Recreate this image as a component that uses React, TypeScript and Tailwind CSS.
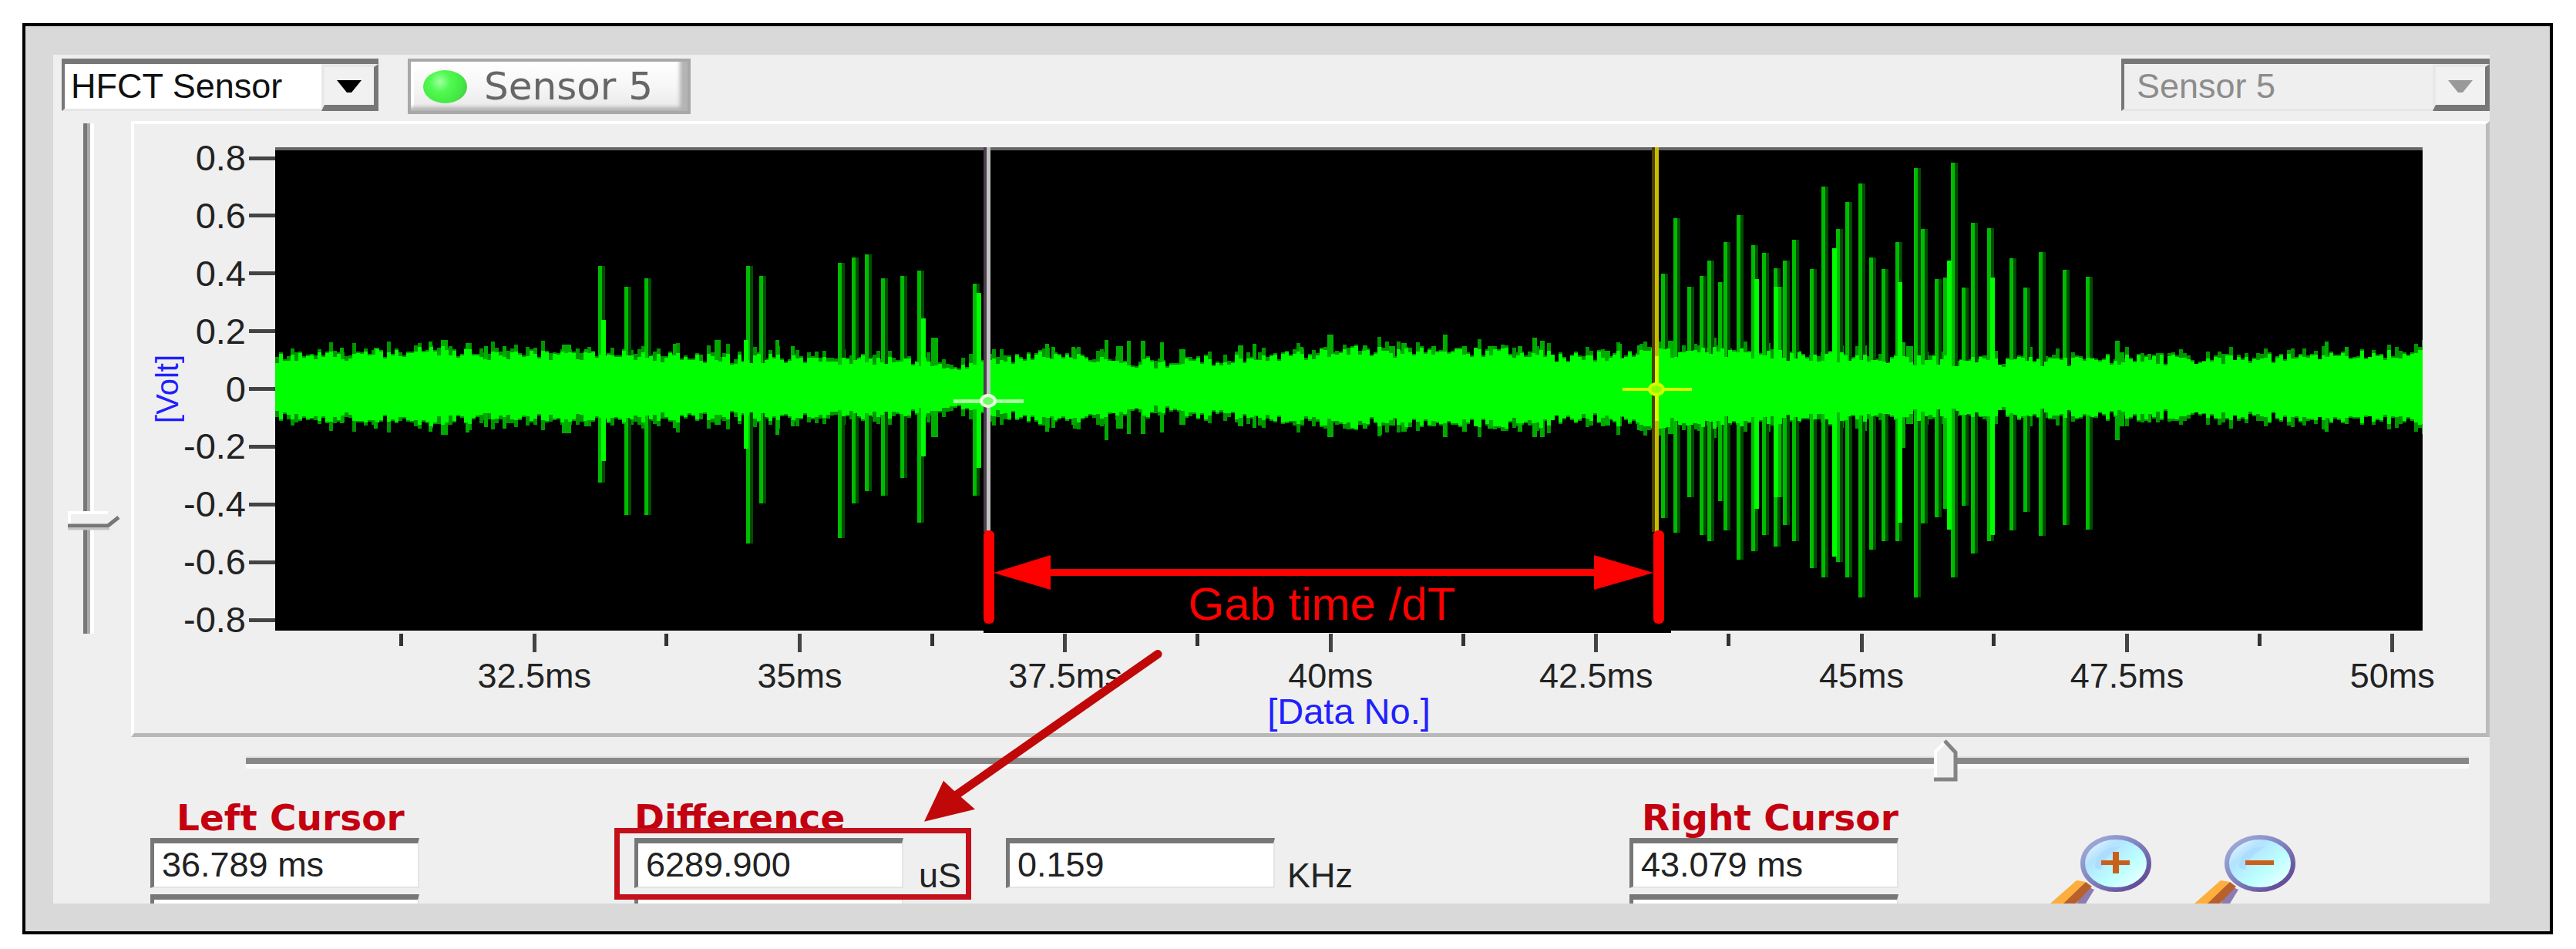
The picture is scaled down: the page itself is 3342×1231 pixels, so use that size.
import React, { useState } from "react";

const PLOT = { x: 357, y: 191, w: 2786, h: 627 };

const Y_LABELS = ["0.8", "0.6", "0.4", "0.2", "0", "-0.2", "-0.4", "-0.6", "-0.8"];
const X_LABELS = ["32.5ms", "35ms", "37.5ms", "40ms", "42.5ms", "45ms", "47.5ms", "50ms"];

// Noise band: x, upper edge, lower edge
const BAND: number[][] = [
  [357, 466, 538], [460, 464, 540], [570, 457, 545], [640, 464, 538], [740, 463, 541], [830, 463, 542],
  [920, 468, 537], [1010, 467, 540], [1100, 470, 535], [1200, 472, 534], [1230, 476, 530], [1290, 472, 532],
  [1350, 464, 541], [1430, 469, 537], [1515, 475, 529], [1560, 470, 536], [1640, 467, 540], [1700, 461, 545],
  [1760, 458, 547], [1850, 459, 545], [1980, 460, 549], [2035, 467, 539], [2090, 463, 543], [2150, 460, 548],
  [2240, 459, 545], [2360, 465, 540], [2440, 469, 537], [2560, 471, 534], [2660, 472, 534], [2760, 467, 538],
  [2850, 470, 536], [2950, 467, 539], [3060, 464, 541], [3143, 462, 543],
];

// Short peaks standing out of the band: x, top, bottom, width
const PEAKS: number[][] = [
  [444, 451, 549, 5], [488, 451, 556, 5], [559, 443, 560, 5], [577, 441, 564, 9], [607, 445, 561, 5],
  [631, 449, 554, 5], [655, 449, 556, 5], [735, 447, 562, 12], [761, 453, 553, 5], [876, 446, 555, 5],
  [931, 441, 551, 8], [1009, 441, 564, 5], [1029, 449, 553, 5], [1213, 438, 567, 9], [1359, 446, 560, 5],
  [1367, 450, 555, 5], [1393, 450, 551, 5], [1436, 441, 571, 5], [1453, 449, 556, 9], [1465, 442, 563, 5],
  [1483, 442, 563, 6], [1508, 444, 561, 5], [1534, 453, 551, 8], [1610, 448, 553, 7], [1628, 446, 555, 5],
  [1688, 450, 550, 6], [1726, 434, 567, 8], [1771, 448, 556, 6], [1791, 450, 564, 5], [1806, 449, 552, 8],
  [1822, 445, 560, 7], [1860, 449, 553, 6], [1875, 434, 567, 6], [1900, 449, 560, 6], [1935, 449, 556, 9],
  [1972, 449, 560, 6], [1991, 438, 567, 6], [2001, 442, 567, 6], [2083, 455, 552, 12], [2102, 446, 553, 5],
  [2127, 448, 558, 6], [2166, 442, 563, 10], [2470, 444, 581, 5], [2478, 449, 550, 9], [2630, 457, 552, 5],
  [2747, 442, 571, 6], [2752, 457, 553, 8], [2789, 459, 548, 5], [3019, 443, 560, 5], [3045, 450, 550, 5],
];

// Discharge pulses: x, top, bottom
const PULSES: number[][] = [
  [778, 345, 626], [812, 372, 668], [838, 361, 668], [970, 345, 705], [987, 358, 653], [1089, 341, 698],
  [1107, 334, 653], [1124, 330, 637], [1145, 361, 643], [1170, 358, 620], [1192, 351, 678], [1264, 368, 643],
  [2157, 355, 672], [2173, 283, 691], [2191, 372, 645], [2207, 358, 694], [2217, 338, 702], [2231, 366, 650],
  [2238, 314, 688], [2255, 279, 726], [2274, 318, 715], [2288, 328, 694], [2303, 348, 709], [2308, 372, 645],
  [2315, 338, 681], [2327, 311, 702], [2350, 349, 737], [2365, 242, 749], [2384, 297, 729], [2396, 262, 749],
  [2413, 238, 775], [2427, 334, 713], [2443, 349, 702], [2461, 314, 702], [2485, 218, 775], [2494, 297, 679],
  [2512, 362, 671], [2523, 360, 660], [2533, 211, 749], [2547, 373, 656], [2559, 289, 718], [2580, 296, 702],
  [2609, 335, 688], [2627, 373, 664], [2647, 327, 695], [2678, 350, 681], [2708, 359, 687],
];

// Overlapping samples that draw at full brightness
const BRIGHT: number[][] = [
  [782, 415, 598], [967, 441, 582], [1197, 413, 592], [1269, 380, 607], [2278, 362, 660], [2303, 372, 645],
  [2379, 322, 722], [2464, 366, 678], [2528, 338, 687], [2584, 360, 694],
];

function bandAt(x: number) {
  let i = 0;
  while (i < BAND.length - 2 && BAND[i + 1][0] < x) i++;
  const [x0, t0, b0] = BAND[i];
  const [x1, t1, b1] = BAND[i + 1];
  const k = (x - x0) / (x1 - x0);
  return [t0 + (t1 - t0) * k, b0 + (b1 - b0) * k];
}

function makeNoise() {
  let seed = 71;
  const rnd = () => {
    seed = (seed * 16807) % 2147483647;
    return seed / 2147483647;
  };
  let core = "";
  let fringe = "";
  for (let x = PLOT.x; x < PLOT.x + PLOT.w; x += 5) {
    const [t, b] = bandAt(x);
    const lift = Math.round((rnd() - 0.35) * 14);
    const top = Math.round(t) - lift;
    const bottom = Math.round(b) + Math.round(lift * 0.9 + (rnd() - 0.5) * 4);
    core += `M${x} ${top}h5V${bottom}h-5z`;
    const extra = rnd() > 0.5 ? Math.round(rnd() * 14) : 2;
    fringe += `M${x} ${top - extra}h5V${bottom + extra}h-5z`;
  }
  return { core, fringe };
}

const NOISE = makeNoise();

function Waveform() {
  return (
    <svg
      className="absolute inset-0 h-full w-full"
      viewBox="357 191 2786 627"
      preserveAspectRatio="none"
      shapeRendering="crispEdges"
      role="img"
      aria-label="Sensor signal in volts over time"
    >
      <path d={NOISE.fringe} fill="#009600" />
      {PEAKS.map(([x, t, b, w]) => (
        <rect key={x} x={x - Math.round(w / 2)} y={t} width={w} height={b - t} fill="#00ac00" />
      ))}
      {PULSES.map(([x, t, b]) => (
        <g key={x}>
          <rect x={x - 2} y={t} width={9} height={b - t} fill="#004c00" />
          <rect x={x - 2} y={t} width={5} height={b - t} fill="#00bc00" />
        </g>
      ))}
      {BRIGHT.map(([x, t, b]) => (
        <rect key={x} x={x - 2} y={t} width={6} height={b - t} fill="#00ff00" />
      ))}
      <path d={NOISE.core} fill="#00ff00" />

      <rect x="1276" y="191" width="4" height="499" fill="#4a3f4a" />
      <rect x="1280" y="191" width="5" height="499" fill="#c4c4c4" />
      <path d="M1237 518h91v5h-91z" fill="#a8ffa0" />
      <ellipse cx="1282" cy="520" rx="9" ry="7" fill="#70ff60" stroke="#e8ffe4" strokeWidth="4" shapeRendering="auto" />
      <rect x="2143" y="191" width="4" height="499" fill="#4a4000" />
      <rect x="2147" y="191" width="5" height="499" fill="#c8bc00" />
      <rect x="2147" y="462" width="5" height="84" fill="#d8ff00" />
      <path d="M2105 503h90v4h-90z" fill="#d8ff00" />
      <ellipse cx="2149" cy="505" rx="9" ry="7" fill="#90ff00" stroke="#d0ff00" strokeWidth="4" shapeRendering="auto" />

      <g fill="#ff0000" shapeRendering="auto">
        <rect x="1276" y="688" width="14" height="121" rx="6" />
        <rect x="2145" y="688" width="14" height="121" rx="6" />
        <rect x="1360" y="738" width="712" height="9" />
        <path d="M1289 743L1363 720V765z" />
        <path d="M2145 743L2068 720V765z" />
      </g>
    </svg>
  );
}

function Combo({ label, options, disabled, className }: { label: string; options: string[]; disabled?: boolean; className: string }) {
  return (
    <div className={`relative h-[68px] border-4 border-t-[7px] border-b-[3px] border-[#777777] border-b-[#e6e6e6] ${className}`}>
      <select
        aria-label={label}
        disabled={disabled}
        className="h-full w-full appearance-none bg-white pl-2 pr-20 text-[45px] leading-[48px] text-[#111111] opacity-100 outline-none disabled:bg-[#efefef] disabled:pl-4 disabled:text-[#8c8c8c]"
      >
        {options.map((o) => (
          <option key={o}>{o}</option>
        ))}
      </select>
      <span className="pointer-events-none absolute top-0 -right-1 -bottom-[3px] flex w-[74px] items-center justify-center border-t-4 border-r-[6px] border-b-8 border-l-4 border-[#777777] border-t-[#e8e8e8] border-l-[#e8e8e8] bg-[#f1f1f1]">
        <svg width="32" height="16" viewBox="0 0 32 16" aria-hidden="true">
          <path d="M0 0H32L19 16H13z" fill={disabled ? "#999999" : "#000000"} />
        </svg>
      </span>
    </div>
  );
}

function Field({ id, initial }: { id: string; initial: string }) {
  const [value, setValue] = useState(initial);
  return (
    <input
      id={id}
      aria-label={id}
      value={value}
      onChange={(e) => setValue(e.target.value)}
      className="block h-[65px] w-[349px] shrink-0 border-t-[7px] border-r-2 border-b-2 border-l-[5px] border-[#e4e4e4] border-t-[#777777] border-l-[#777777] bg-white pl-[10px] text-[45px] leading-[48px] text-[#222222] outline-none"
    />
  );
}

function NextField({ id }: { id: string }) {
  return (
    <div className="mt-2 h-3 overflow-hidden">
      <Field id={id} initial="" />
    </div>
  );
}

function Magnifier({ minus }: { minus?: boolean }) {
  const id = minus ? "lens-out" : "lens-in";
  return (
    <svg className="block" width="140" height="90" viewBox="0 0 140 90" aria-hidden="true">
      <defs>
        <linearGradient id={id} x1="0" y1="0" x2="1" y2="1">
          <stop offset="0" stopColor="#ffffff" />
          <stop offset="0.3" stopColor="#b4e2ff" />
          <stop offset="0.6" stopColor="#bcffff" />
          <stop offset="1" stopColor="#ffffff" />
        </linearGradient>
        <linearGradient id={`${id}-rim`} x1="0" y1="0" x2="1" y2="1">
          <stop offset="0" stopColor="#a3b4dc" />
          <stop offset="0.5" stopColor="#7f7fbe" />
          <stop offset="1" stopColor="#5a3c8c" />
        </linearGradient>
      </defs>
      <path d="M34 90L48 68L57 72L46 90z" fill="#8c7cb0" />
      <path d="M14 90L46 62L54 68L33 90z" fill="#b8602c" />
      <path d="M0 90L34 60L46 62L17 90z" fill="#fdae3c" />
      <ellipse cx="85" cy="38" rx="43" ry="34" fill={`url(#${id})`} stroke={`url(#${id}-rim)`} strokeWidth="6" />
      <path d="M58 44C58 26 74 16 92 16C84 22 70 28 66 46z" fill="#a8d8ff" opacity="0.7" />
      <path d="M66 34h37v6h-37z" fill="#c8601c" />
      {!minus && <path d="M81 23h8v28h-8z" fill="#c8601c" />}
    </svg>
  );
}

function Heading({ children, htmlFor, className }: { children: React.ReactNode; htmlFor: string; className?: string }) {
  return (
    <label
      htmlFor={htmlFor}
      className={`mb-[3px] block font-['DejaVu_Sans',sans-serif] text-[47px] leading-[47px] font-bold whitespace-nowrap text-[#c40010] ${className ?? ""}`}
    >
      {children}
    </label>
  );
}

export default function App() {
  const [vertical, setVertical] = useState(78);
  const [horizontal, setHorizontal] = useState(77);

  return (
    <main className="min-h-screen bg-white pt-[30px] pr-[30px] pb-5 pl-[29px] font-['Liberation_Sans',Arial,sans-serif]">
      <section className="border-4 border-black bg-[#d9d9d9] pt-[37px] pr-[78px] pb-9 pl-9">
        <div className="relative overflow-hidden bg-[#efefef]">
          <header className="flex items-start justify-between pt-[5px] pl-[11px]">
            <div className="flex items-start gap-[38px]">
              <Combo label="Sensor type" options={["HFCT Sensor"]} className="w-[411px]" />
              <button className="flex h-[72px] w-[367px] items-center gap-[22px] border-4 border-[#a8a8a8] bg-gradient-to-b from-white via-[#f6f6f6] to-[#e8e8e8] pl-4 font-['DejaVu_Sans',sans-serif] text-[50px] leading-none whitespace-nowrap text-[#666666] shadow-[inset_-10px_-5px_5px_#b4b4b4,inset_4px_4px_0_#ffffff]">
                <span className="h-[43px] w-[57px] shrink-0 rounded-[50%] bg-[radial-gradient(circle_at_38%_35%,#a0ffa0_0%,#50fa50_30%,#44e844_65%,#48b448_100%)]" />
                Sensor 5
              </button>
            </div>
            <Combo label="Sensor channel" options={["Sensor 5"]} disabled className="w-[478px]" />
          </header>

          <div className="mt-[9px] flex">
            <div className="w-[101px] shrink-0 pt-[3px] pl-[19px]">
              <div className="relative flex h-[662px] w-[68px] pl-5">
                <div className="h-full w-[14px] border-r-[5px] border-l-[5px] border-r-white border-l-[#777777] bg-[#aaaaaa]" />
                <svg
                  className="absolute left-0 -translate-y-1/2"
                  style={{ top: `${vertical}%` }}
                  width="68"
                  height="28"
                  viewBox="0 0 68 28"
                  aria-hidden="true"
                >
                  <path d="M2 2H54L66 11L53 24H2z" fill="#efefef" />
                  <path d="M2 22V3H52" fill="none" stroke="#ffffff" strokeWidth="4" />
                  <path d="M0 20H52L66 9" fill="none" stroke="#777777" strokeWidth="5" />
                  <path d="M0 24H54" stroke="#c4c4c4" strokeWidth="3" />
                </svg>
                <input
                  type="range"
                  aria-label="Vertical position"
                  value={vertical}
                  onChange={(e) => setVertical(Number(e.target.value))}
                  className="absolute inset-0 h-full w-full opacity-0 [writing-mode:vertical-lr]"
                />
              </div>
            </div>

            <div className="flex-1 border-t-4 border-r-[5px] border-b-[5px] border-l-4 border-white border-r-[#bcbcbc] border-b-[#b8b8b8]">
              <div className="flex pt-[30px] pr-[82px]">
                <div className="flex w-[74px] shrink-0 items-center justify-center pl-3">
                  <span className="rotate-180 text-[40px] leading-[48px] text-[#2020ff] [writing-mode:vertical-rl]">[Volt]</span>
                </div>
                <div className="flex w-[109px] shrink-0 flex-col justify-between">
                  {Y_LABELS.map((l) => (
                    <div key={l} className="flex h-7 items-center justify-end gap-1 text-[47px] leading-7 text-[#222222]">
                      {l}
                      <span className="h-[5px] w-[34px] shrink-0 bg-[#444444]" />
                    </div>
                  ))}
                </div>
                <div className="relative h-[627px] flex-1 border-t-4 border-[#666666] bg-black">
                  <div className="absolute -bottom-[3px] left-[33%] h-4 w-[32%] bg-black" />
                  <div className="absolute inset-x-0 -top-1 bottom-0">
                    <Waveform />
                    <div className="absolute bottom-[7px] left-[33%] w-[31.5%] text-center text-[60px] leading-[54px] whitespace-nowrap text-[#ff0000]">
                      Gab time /dT
                    </div>
                  </div>
                </div>
              </div>

              <div className="-mr-[51px] grid grid-cols-8 pt-1 pl-[347px]">
                {X_LABELS.map((l) => (
                  <div key={l} className="flex flex-col items-center">
                    <div className="flex w-full justify-between">
                      <span className="-ml-[3px] h-4 w-[5px] bg-[#333333]" />
                      <span className="h-6 w-[5px] bg-[#444444]" />
                      <span className="-mr-[3px] w-[5px]" />
                    </div>
                    <span className="mt-2 text-[45px] leading-[46px] text-[#222222]">{l}</span>
                  </div>
                ))}
              </div>
              <div className="pr-[82px] pb-[5px] pl-[183px] text-center text-[47px] leading-[46px] text-[#2020ff]">[Data No.]</div>
            </div>
          </div>

          <div className="relative mr-[27px] ml-[250px] h-[81px] pt-[25px]">
            <div className="h-[16px] border-t-2 border-b-6 border-t-[#e0e0e0] border-b-[#fafafa] bg-[#888888]" />
            <svg
              className="absolute top-[3px] -translate-x-1/2"
              style={{ left: `${horizontal - 0.5}%` }}
              width="36"
              height="58"
              viewBox="0 0 36 58"
              aria-hidden="true"
            >
              <path d="M2 16L16 2L32 16V56H2z" fill="#efefef" />
              <path d="M4 52V16L16 4" fill="none" stroke="#ffffff" strokeWidth="4" />
              <path d="M16 2L30 17V52H2" fill="none" stroke="#848484" strokeWidth="5" />
            </svg>
            <input
              type="range"
              aria-label="Horizontal position"
              value={horizontal}
              onChange={(e) => setHorizontal(Number(e.target.value))}
              className="absolute inset-x-0 top-0 h-16 w-full opacity-0"
            />
          </div>

          <div className="grid grid-cols-[126fr_628fr_482fr_809fr_546fr_570fr]">
            <div className="col-start-2">
              <Heading htmlFor="left-cursor" className="pl-[34px]">Left Cursor</Heading>
              <Field id="left-cursor" initial="36.789 ms" />
              <NextField id="left-cursor-level" />
            </div>
            <div>
              <Heading htmlFor="difference">Difference</Heading>
              <div className="relative flex items-end gap-5">
                <Field id="difference" initial="6289.900" />
                <span className="text-[45px] leading-8 text-[#222222]">uS</span>
                <span className="pointer-events-none absolute -top-[13px] -left-[26px] h-[93px] w-[463px] border-[7px] border-[#c4101a]" />
              </div>
              <NextField id="difference-level" />
            </div>
            <div className="pt-[50px]">
              <div className="flex items-end gap-4">
                <Field id="frequency" initial="0.159" />
                <span className="text-[45px] leading-8 text-[#222222]">KHz</span>
              </div>
            </div>
            <div>
              <Heading htmlFor="right-cursor" className="pl-4">Right Cursor</Heading>
              <Field id="right-cursor" initial="43.079 ms" />
              <NextField id="right-cursor-level" />
            </div>
            <div className="flex items-end gap-[47px]">
              <button aria-label="Zoom in">
                <Magnifier />
              </button>
              <button aria-label="Zoom out">
                <Magnifier minus />
              </button>
            </div>
          </div>

          <svg
            className="pointer-events-none absolute inset-0 h-full w-full"
            viewBox="69 71 3161 1099"
            preserveAspectRatio="none"
            aria-hidden="true"
          >
            <path d="M1502 847L1240 1030" stroke="#c00808" strokeWidth="11" strokeLinecap="round" />
            <path d="M1199 1064L1224 1011L1241 1027L1265 1048z" fill="#c00808" />
          </svg>
        </div>
      </section>
    </main>
  );
}
